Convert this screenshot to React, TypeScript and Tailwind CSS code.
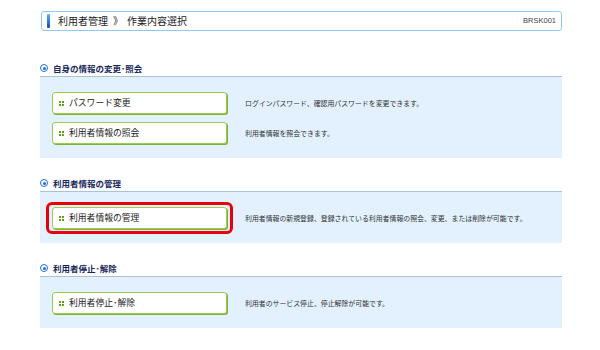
import React from "react";

const font = { fontFamily: '"Noto Sans CJK JP", "Noto Sans", sans-serif' };

function Dots() {
  return (
    <span className="grid grid-cols-2 gap-[1px] w-[5px] shrink-0">
      <span className="w-[2px] h-[2px] bg-[#5f9e1e]" />
      <span className="w-[2px] h-[2px] bg-[#5f9e1e]" />
      <span className="w-[2px] h-[2px] bg-[#5f9e1e]" />
      <span className="w-[2px] h-[2px] bg-[#5f9e1e]" />
    </span>
  );
}

function Btn({ label, highlight }: { label: string; highlight?: boolean }) {
  return (
    <div className="relative w-[175px] h-[22px] shrink-0">
      {highlight && (
        <div className="absolute left-[-6px] right-[-6px] top-[-5px] bottom-[-5px] border-[3px] border-[#e8000b] rounded-[6px]" />
      )}
      <div className="relative w-full h-full bg-white border border-[#9ccd4c] rounded-[3px] shadow-[1px_1px_0_#7fb22e] flex items-center pl-[6px] gap-[5px]">
        <Dots />
        <span className="text-[8.8px] text-[#222] leading-none">{label}</span>
      </div>
    </div>
  );
}

function Row({ label, desc, highlight }: { label: string; desc: string; highlight?: boolean }) {
  return (
    <div className="flex items-center gap-[18px]">
      <Btn label={label} highlight={highlight} />
      <span className="text-[6.9px] text-[#333] leading-none whitespace-nowrap">{desc}</span>
    </div>
  );
}

function Section({
  title,
  rows,
  mt,
}: {
  title: string;
  rows: { label: string; desc: string; highlight?: boolean }[];
  mt: string;
}) {
  return (
    <div className={mt}>
      <div className="h-[16px] flex items-center gap-[5px]">
        <span className="w-[8px] h-[8px] rounded-full border-[1.5px] border-[#1f6fd6] flex items-center justify-center">
          <span className="w-[3px] h-[3px] rounded-full bg-[#1f6fd6]" />
        </span>
        <span className="text-[8.5px] font-bold text-[#1b2a5c] leading-none">{title}</span>
      </div>
      <div className="border-t border-[#a9c3d6] bg-[#e2f1fd] pl-[12px] pt-[15px] pb-[14px] flex flex-col gap-[8px]">
        {rows.map((r) => (
          <Row key={r.label} {...r} />
        ))}
      </div>
    </div>
  );
}

export default function App() {
  return (
    <div className="w-[600px] h-[350px] bg-white pl-[40px] pr-[38px] pt-[11px]" style={font}>
      <div className="h-[20px] border border-[#8ec9f3] rounded-[3px] flex items-center pl-[5px] pr-[5px] ml-[1px]">
        <span className="w-[3px] h-[14px] bg-gradient-to-b from-[#5fb0f0] to-[#0a4fb8] rounded-[1px]" />
        <span className="ml-[8px] text-[10px] text-[#222] leading-none flex items-center">
          <span>利用者管理</span>
          <span className="ml-[5px] mr-[4px]">》</span>
          <span>作業内容選択</span>
        </span>
        <span
          className="ml-auto text-[7.5px] text-[#444] leading-none"
          style={{ fontFamily: '"Liberation Sans", Arial, sans-serif' }}
        >
          BRSK001
        </span>
      </div>
      <Section
        mt="mt-[29px]"
        title="自身の情報の変更･照会"
        rows={[
          { label: "パスワード変更", desc: "ログインパスワード、確認用パスワードを変更できます。" },
          { label: "利用者情報の照会", desc: "利用者情報を照会できます。" },
        ]}
      />
      <Section
        mt="mt-[17px]"
        title="利用者情報の管理"
        rows={[
          {
            label: "利用者情報の管理",
            desc: "利用者情報の新規登録、登録されている利用者情報の照会、変更、または削除が可能です。",
            highlight: true,
          },
        ]}
      />
      <Section
        mt="mt-[17px]"
        title="利用者停止･解除"
        rows={[{ label: "利用者停止･解除", desc: "利用者のサービス停止、停止解除が可能です。" }]}
      />
    </div>
  );
}
